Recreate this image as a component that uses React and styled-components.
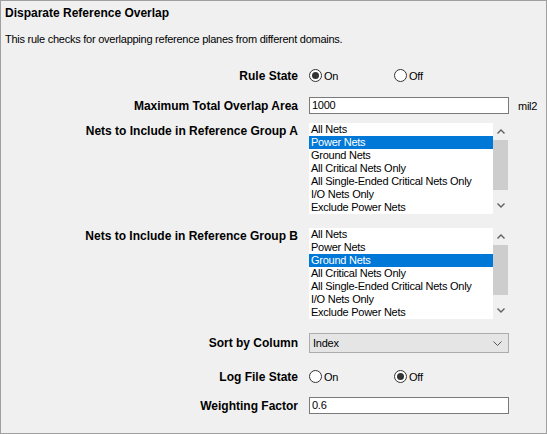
import React from 'react';
import styled, { createGlobalStyle } from 'styled-components';

const GlobalStyle = createGlobalStyle`
  html, body {
    margin: 0;
    padding: 0;
    background: #f0f0f0;
  }
  body {
    font-family: "Liberation Sans", Arial, sans-serif;
    font-size: 11px;
    letter-spacing: -0.25px;
    color: #000;
  }
`;

const Panel = styled.div`
  width: 547px;
  height: 434px;
  box-sizing: border-box;
  border: 1px solid #a0a0a0;
  background: #f0f0f0;
  display: flex;
  flex-direction: column;
`;

const Title = styled.div`
  margin: 5px 0 0 4px;
  line-height: 14px;
  font-size: 12px;
  font-weight: bold;
  letter-spacing: 0;
`;

const Description = styled.div`
  margin: 12px 0 0 4px;
  line-height: 14px;
`;

const Row = styled.div`
  display: grid;
  grid-template-columns: 297px 200px auto;
  column-gap: 11px;
  align-items: ${(p) => (p.$top ? 'start' : 'center')};
  margin-top: ${(p) => p.$gap}px;
  height: ${(p) => p.$height}px;
`;

const Label = styled.div`
  text-align: right;
  font-size: 12px;
  font-weight: bold;
  letter-spacing: 0;
  line-height: 14px;
  white-space: nowrap;
  padding-top: ${(p) => (p.$top ? 1 : 0)}px;
`;

const Unit = styled.div`
  margin-left: -2px;
  line-height: 14px;
`;

const RadioGroup = styled.div`
  display: flex;
`;

const RadioOption = styled.label`
  display: flex;
  align-items: center;
  gap: 2px;
  width: 85px;
`;

const RadioCircle = styled.span`
  width: 13px;
  height: 13px;
  box-sizing: border-box;
  border: 1px solid #333;
  border-radius: 50%;
  background: #fff;
  display: flex;
  align-items: center;
  justify-content: center;

  &::after {
    content: '';
    width: 7px;
    height: 7px;
    border-radius: 50%;
    background: ${(p) => (p.$checked ? '#333' : 'transparent')};
  }
`;

const TextBox = styled.div`
  height: 17px;
  box-sizing: border-box;
  border: 1px solid #7a7a7a;
  background: #fff;
  padding: 0 2px;
  line-height: 15px;
`;

const ListBox = styled.div`
  display: flex;
  height: 91px;
`;

const Items = styled.div`
  width: 184px;
  background: #fff;
  overflow: hidden;
`;

const Item = styled.div`
  height: 13px;
  line-height: 13px;
  padding-left: 2px;
  white-space: nowrap;
  background: ${(p) => (p.$selected ? '#0078d7' : 'transparent')};
  color: ${(p) => (p.$selected ? '#fff' : '#000')};
`;

const ScrollBar = styled.div`
  width: 16px;
  display: flex;
  flex-direction: column;
  background: #f0f0f0;
`;

const ScrollArrow = styled.div`
  height: 17px;
  display: flex;
  align-items: center;
  justify-content: center;
`;

const ScrollTrack = styled.div`
  flex: 1;
  display: flex;
  flex-direction: column;
`;

const ScrollThumb = styled.div`
  height: 50px;
  width: 15px;
  background: #cdcdcd;
`;

const Select = styled.div`
  height: 20px;
  box-sizing: border-box;
  border: 1px solid #acacac;
  background: #e5e5e5;
  display: flex;
  align-items: center;
  justify-content: space-between;
  padding: 0 6px 0 3px;
  line-height: 14px;
`;

const Chevron = ({ up }) => (
  <svg width="8" height="5" viewBox="0 0 8 5">
    <path
      d={up ? 'M0.5 4.5 L4 1 L7.5 4.5' : 'M0.5 0.5 L4 4 L7.5 0.5'}
      fill="none"
      stroke="#606060"
      strokeWidth="1.4"
    />
  </svg>
);

const SelectArrow = () => (
  <svg width="9" height="5" viewBox="0 0 9 5">
    <path d="M0.5 0.5 L4.5 4.5 L8.5 0.5" fill="none" stroke="#555" strokeWidth="1" />
  </svg>
);

const nets = [
  'All Nets',
  'Power Nets',
  'Ground Nets',
  'All Critical Nets Only',
  'All Single-Ended Critical Nets Only',
  'I/O Nets Only',
  'Exclude Power Nets',
];

const NetList = ({ selected }) => (
  <ListBox>
    <Items>
      {nets.map((n) => (
        <Item key={n} $selected={n === selected}>
          {n}
        </Item>
      ))}
    </Items>
    <ScrollBar>
      <ScrollArrow>
        <Chevron up />
      </ScrollArrow>
      <ScrollTrack>
        <ScrollThumb />
      </ScrollTrack>
      <ScrollArrow>
        <Chevron />
      </ScrollArrow>
    </ScrollBar>
  </ListBox>
);

const OnOff = ({ on }) => (
  <RadioGroup>
    <RadioOption>
      <RadioCircle $checked={on} />
      On
    </RadioOption>
    <RadioOption>
      <RadioCircle $checked={!on} />
      Off
    </RadioOption>
  </RadioGroup>
);

const App = () => (
  <>
    <GlobalStyle />
    <Panel>
      <Title>Disparate Reference Overlap</Title>
      <Description>This rule checks for overlapping reference planes from different domains.</Description>

      <Row $gap={21} $height={17}>
        <Label>Rule State</Label>
        <OnOff on />
      </Row>

      <Row $gap={13} $height={17}>
        <Label>Maximum Total Overlap Area</Label>
        <TextBox>1000</TextBox>
        <Unit>mil2</Unit>
      </Row>

      <Row $gap={9} $height={91} $top>
        <Label $top>Nets to Include in Reference Group A</Label>
        <NetList selected="Power Nets" />
      </Row>

      <Row $gap={14} $height={91} $top>
        <Label $top>Nets to Include in Reference Group B</Label>
        <NetList selected="Ground Nets" />
      </Row>

      <Row $gap={14} $height={20}>
        <Label>Sort by Column</Label>
        <Select>
          Index
          <SelectArrow />
        </Select>
      </Row>

      <Row $gap={16} $height={15}>
        <Label>Log File State</Label>
        <OnOff on={false} />
      </Row>

      <Row $gap={13} $height={17}>
        <Label>Weighting Factor</Label>
        <TextBox>0.6</TextBox>
      </Row>
    </Panel>
  </>
);

export default App;
